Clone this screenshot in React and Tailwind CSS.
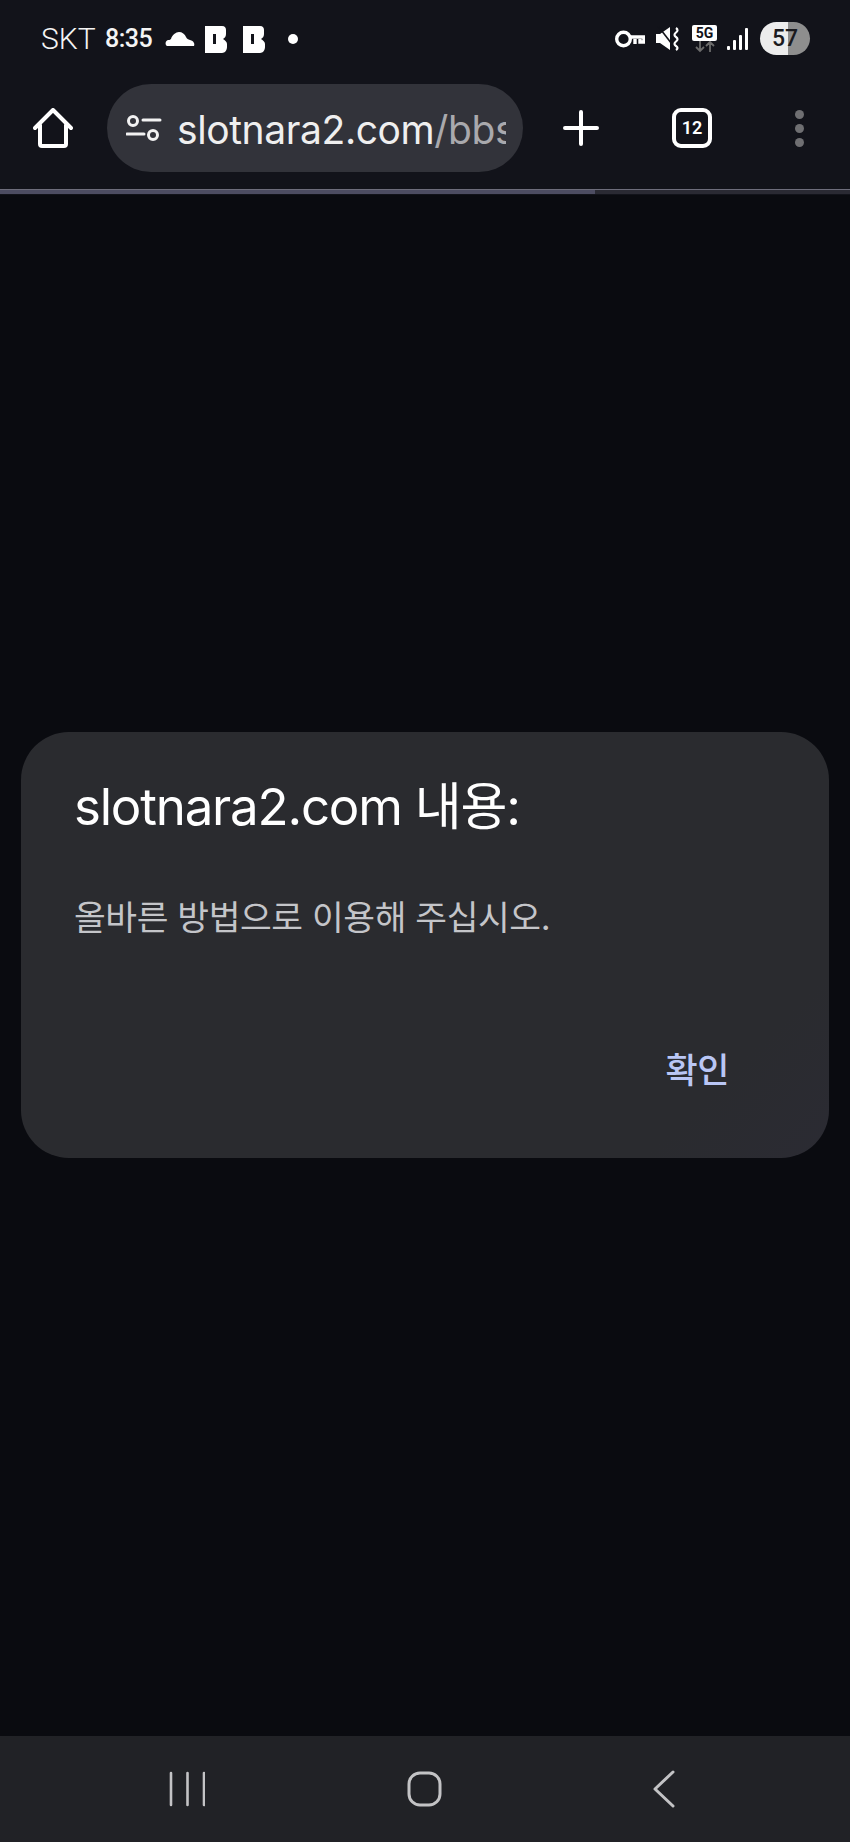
const sans = "font-['Inter','Noto_Sans_CJK_KR',sans-serif]";

const StatusLeft = () => (
  <div className="flex items-center">
    <span className="ml-[41px] w-[64px] text-[30px] leading-none font-['Roboto',sans-serif] font-light text-[#f4f4f4]">SKT</span>
    <span className="w-[60px] text-[25px] leading-none font-['Roboto',sans-serif] font-medium tracking-[-0.5px] text-[#f4f4f4]">8:35</span>
    <svg width="30" height="20" viewBox="0 0 30 20" fill="#fff">
      <path d="M2 17c-2-1-2-5 1-6 1 0 2 0 3-1 1-4 5-7 8-7 3 0 6 2 7 5 1 2 2 2 4 3 4 1 5 4 4 6z" />
    </svg>
    <svg className="ml-[9px]" width="24" height="28" viewBox="0 0 24 28" fill="#fff">
      <path fillRule="evenodd" d="M1 1h17c3 0 4 2 4 4v4c0 2-1 4-3 5 2 1 4 3 4 5v3c0 3-2 6-5 6H1zM9 9v10h3V9z" />
    </svg>
    <svg className="ml-[14px]" width="24" height="28" viewBox="0 0 24 28" fill="#fff">
      <path fillRule="evenodd" d="M1 1h17c3 0 4 2 4 4v4c0 2-1 4-3 5 2 1 4 3 4 5v3c0 3-2 6-5 6H1zM9 9v10h3V9z" />
    </svg>
    <span className="ml-[22px] w-[10px] h-[10px] rounded-full bg-white" />
  </div>
);

const StatusRight = () => (
  <div className="flex items-center">
    <svg width="30" height="20" viewBox="0 0 30 20" fill="none" stroke="#fff" strokeWidth="3.4">
      <circle cx="8.500" cy="10" r="6.800" />
      <path d="M15 8h14v5h-4v-3M20 10v5" />
    </svg>
    <svg className="ml-[10px]" width="26" height="26" viewBox="0 0 26 26">
      <path d="M1 8h4L15 1v23L5 17H1z" fill="#fff" />
      <path d="M1 2l17 22" stroke="#12131a" strokeWidth="1.6" transform="translate(2 -2)" />
      <path d="M21 2q3 2 0 4.500t0 4.500 0 4.500 0 4.500 0 4" fill="none" stroke="#fff" strokeWidth="2.2" />
    </svg>
    <div className="ml-[11px] flex flex-col items-center">
      <span className="w-[25px] h-[16px] rounded-[2px] bg-white flex items-center justify-center text-[14px] leading-none font-['Roboto',sans-serif] font-bold text-[#12131a]">5G</span>
      <svg width="20" height="12" viewBox="0 0 20 12" fill="none" stroke="#6b6b6b" strokeWidth="1.8">
        <path d="M5 0v10M1 6l4 4 4-4M15 11V1M11 5l4-4 4 4" />
      </svg>
    </div>
    <svg className="ml-[10px]" width="22" height="24" viewBox="0 0 22 24" fill="#fff">
      <rect x="0" y="19" width="3" height="4" rx="1" />
      <rect x="6" y="13" width="3" height="10" rx="1" />
      <rect x="12" y="8" width="3" height="15" rx="1" />
      <rect x="18" y="1" width="3" height="22" rx="1" />
    </svg>
    <div className="ml-[11px] w-[50px] h-[33px] rounded-full bg-[linear-gradient(90deg,#ececec_0,#ececec_56%,#8e8e8e_56%,#8e8e8e_100%)] flex items-center justify-center text-[23px] leading-none font-['Roboto',sans-serif] font-medium text-[#1a1a1e]">
      57
    </div>
  </div>
);

const AddressBar = () => (
  <div className="ml-[34px] w-[416px] h-[88px] rounded-full bg-[#32333a] flex items-center pl-[19px] overflow-hidden">
    <svg className="shrink-0" width="36" height="28" viewBox="0 0 36 28" fill="none" stroke="#f2f2f2" strokeWidth="3">
      <circle cx="7" cy="7" r="4.5" />
      <path d="M17 6h17M1 20h17" strokeLinecap="round" />
      <circle cx="27" cy="21" r="4.5" />
    </svg>
    <div className={`ml-[15px] mt-[4px] w-[329px] overflow-hidden whitespace-nowrap text-[39px] leading-[50px] text-[#efefef] ${sans} font-normal tracking-[-0.4px]`}>
      slotnara2.com<span className="text-[#a9a9ad]">/bbs</span>
    </div>
  </div>
);

const Toolbar = () => (
  <div className="h-[106px] mb-[8px] flex items-center pl-[33px]">
    <svg className="shrink-0" width="40" height="40" viewBox="0 0 40 40" fill="none" stroke="#fff" strokeWidth="4" strokeLinejoin="round" strokeLinecap="round">
      <path d="M2 20L20 2l18 18M7 17v19a2 2 0 0 0 2 2h22a2 2 0 0 0 2-2V17" />
    </svg>
    <AddressBar />
    <svg className="ml-[40px] shrink-0" width="36" height="36" viewBox="0 0 36 36" stroke="#fff" strokeWidth="4" strokeLinecap="round">
      <path d="M18 2v32M2 18h32" />
    </svg>
    <div className="ml-[73px] shrink-0 w-[40px] h-[40px] rounded-[9px] border-[4px] border-white flex items-center justify-center text-[18px] leading-none font-['Roboto',sans-serif] font-semibold text-white">
      12
    </div>
    <div className="ml-[83px] shrink-0 flex flex-col gap-[5px]">
      <span className="w-[9px] h-[9px] rounded-full bg-[#6f6f72]" />
      <span className="w-[9px] h-[9px] rounded-full bg-[#6f6f72]" />
      <span className="w-[9px] h-[9px] rounded-full bg-[#6f6f72]" />
    </div>
  </div>
);

const Dialog = () => (
  <div className="mx-[21px] h-[426px] rounded-[48px] bg-[linear-gradient(135deg,#2a2b2f_85%,#2b2b33_100%)] pl-[53px] pr-[100px] flex flex-col">
    <h2 className={`mt-[45px] text-[51px] leading-[60px] font-normal tracking-[-1.2px] text-white ${sans}`}>slotnara2.com 내용:</h2>
    <p className={`mt-[59px] text-[34.5px] leading-[44px] font-normal tracking-[-0.4px] text-[#c4c5c9] ${sans}`}>올바른 방법으로 이용해 주십시오.</p>
    <div className={`mt-[108px] self-end text-[35px] leading-[44px] font-medium tracking-[-0.5px] text-[#b9c6f5] ${sans}`}>확인</div>
  </div>
);

const NavBar = () => (
  <div className="h-[106px] bg-[#212226] flex items-center">
    <svg className="ml-[169px]" width="36" height="36" viewBox="0 0 36 36" stroke="#c3c3c5" strokeWidth="2.6" strokeLinecap="round">
      <path d="M2 2v32M18.500 2v32M35 2v32" />
    </svg>
    <svg className="ml-[202px]" width="36" height="36" viewBox="0 0 36 36" fill="none" stroke="#c3c3c5" strokeWidth="3">
      <rect x="2" y="2" width="31" height="32" rx="11" />
    </svg>
    <svg className="ml-[210px]" width="22" height="38" viewBox="0 0 22 38" fill="none" stroke="#c3c3c5" strokeWidth="3" strokeLinecap="round" strokeLinejoin="round">
      <path d="M20 2L2 19l18 17" />
    </svg>
  </div>
);

export default function App() {
  return (
    <div className="w-[850px] h-[1842px] flex flex-col bg-[#0a0b10] overflow-hidden">
      <div className="bg-[#12131a]">
        <div className="h-[75px] pt-[2px] flex items-center justify-between pr-[40px]">
          <StatusLeft />
          <StatusRight />
        </div>
        <Toolbar />
        <div className="h-[5px] border-t border-[#6d6d7b] bg-[linear-gradient(90deg,#4d4d62_0,#4d4d62_70%,#2a2a33_70%,#2a2a33_100%)]" />
        <div className="h-[1px]" />
      </div>
      <div className="flex-1 flex flex-col pt-[537px]">
        <Dialog />
      </div>
      <NavBar />
    </div>
  );
}
